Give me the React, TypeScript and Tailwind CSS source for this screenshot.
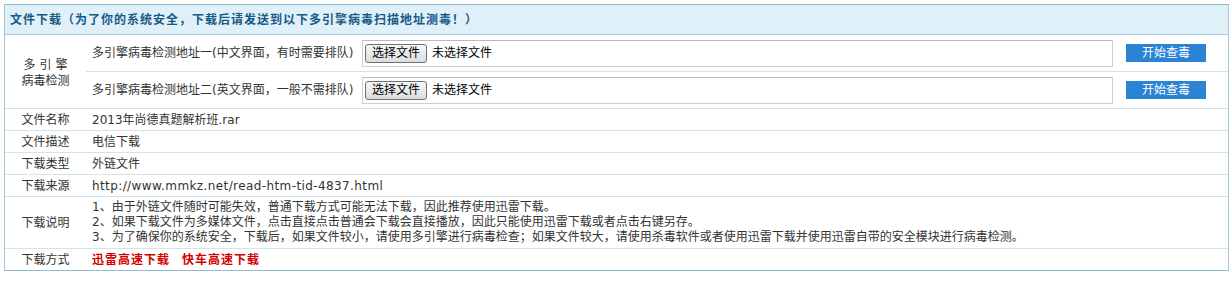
import React from 'react';

const font = { fontFamily: '"DejaVu Sans", "Noto Sans CJK SC", sans-serif' };

const engines = [
  { id: 1, name: '多引擎病毒检测地址一(中文界面，有时需要排队)' },
  { id: 2, name: '多引擎病毒检测地址二(英文界面，一般不需排队)' },
];

const infoRows = [
  { label: '文件名称', value: '2013年尚德真题解析班.rar', link: false },
  { label: '文件描述', value: '电信下载', link: false },
  { label: '下载类型', value: '外链文件', link: false },
  { label: '下载来源', value: 'http://www.mmkz.net/read-htm-tid-4837.html', link: true },
];

const notes = [
  '1、由于外链文件随时可能失效，普通下载方式可能无法下载，因此推荐使用迅雷下载。',
  '2、如果下载文件为多媒体文件，点击直接点击普通会下载会直接播放，因此只能使用迅雷下载或者点击右键另存。',
  '3、为了确保你的系统安全，下载后，如果文件较小，请使用多引擎进行病毒检查；如果文件较大，请使用杀毒软件或者使用迅雷下载并使用迅雷自带的安全模块进行病毒检测。',
];

const EngineRow: React.FC<{ name: string; last: boolean }> = ({ name, last }) => (
  <div className={`flex items-center ${last ? 'h-[36px]' : 'h-[37px] border-b border-[#d3e3ea]'}`}>
    <div className="w-[276px] pl-[6px] whitespace-nowrap">{name}</div>
    <div className="w-[751px] h-[27px] flex items-center pl-[2px] border border-[#cfcfcf] border-t-[#b9b9b9]">
      <div className="h-[19px] w-[62px] flex items-center justify-center rounded-[3px] border border-[#707070] bg-gradient-to-b from-[#f7f7f7] to-[#dcdcdc] text-black">
        选择文件
      </div>
      <span className="ml-[5px] text-black">未选择文件</span>
    </div>
    <button className="ml-[13px] w-[80px] h-[18px] bg-[#2b83d5] text-white leading-[18px]">开始查毒</button>
  </div>
);

const App: React.FC = () => {
  return (
    <div className="w-[1232px] h-[289px] bg-white pt-[4px] pl-[4px]" style={font}>
      <div className="w-[1225px] border border-[#a4c7d7] border-t-[#8bb8cc] border-b-[#93bbce] text-[12px] text-[#333]">
        <div className="h-[30px] bg-[#e0f0f8] border-b border-[#a9cbd9] pl-[5px] flex items-center font-bold text-[#175a88] tracking-[1px]">
          文件下载（为了你的系统安全，下载后请发送到以下多引擎病毒扫描地址测毒！）
        </div>

        <div className="flex border-b border-[#d3e3ea]">
          <div className="w-[81px] flex flex-col items-center justify-center leading-[16px] pt-[3px]">
            <span className="tracking-[4px] pl-[4px]">多引擎</span>
            <span>病毒检测</span>
          </div>
          <div className="flex-1">
            {engines.map((e, i) => (
              <EngineRow key={e.id} name={e.name} last={i === engines.length - 1} />
            ))}
          </div>
        </div>

        {infoRows.map((row) => (
          <div key={row.label} className="flex h-[22px] leading-[22px] border-b border-[#d3e3ea]">
            <div className="w-[81px] text-center">{row.label}</div>
            <div className={`pl-[6px] ${row.link ? 'tracking-[0.4px]' : ''}`}>{row.value}</div>
          </div>
        ))}

        <div className="flex h-[52px] border-b border-[#d3e3ea]">
          <div className="w-[81px] flex items-center justify-center">下载说明</div>
          <div className="pl-[6px] pt-[3px] leading-[15px]">
            {notes.map((n) => (
              <div key={n}>{n}</div>
            ))}
          </div>
        </div>

        <div className="flex h-[21px] leading-[22px]">
          <div className="w-[81px] text-center">下载方式</div>
          <div className="pl-[6px] font-bold text-[#d40000] tracking-[1px]">
            <span>迅雷高速下载</span>
            <span className="ml-[12px]">快车高速下载</span>
          </div>
        </div>
      </div>
    </div>
  );
};

export default App;
